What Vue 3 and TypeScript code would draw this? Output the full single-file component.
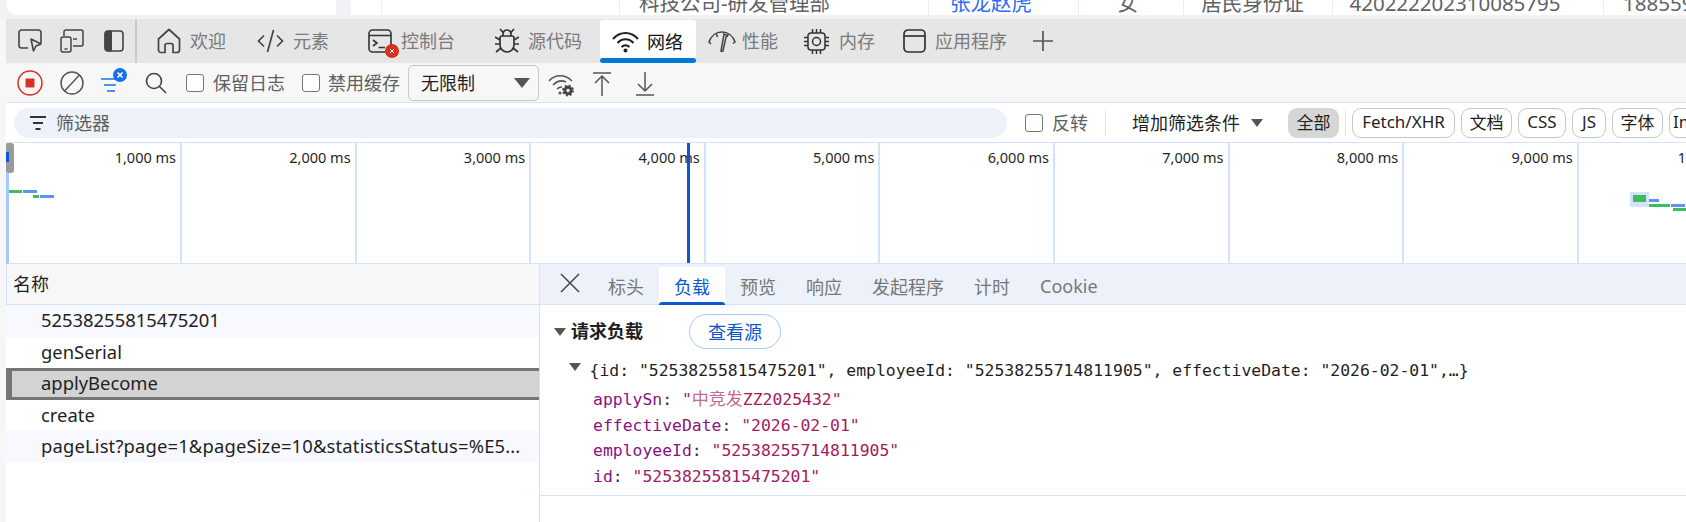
<script setup lang="ts">
const marks: string[] = ['1,000 ms', '2,000 ms', '3,000 ms', '4,000 ms', '5,000 ms', '6,000 ms', '7,000 ms', '8,000 ms', '9,000 ms', '10,000 ms']
const rows: { name: string; cls: string }[] = [
  { name: '52538255815475201', cls: 'alt' },
  { name: 'genSerial', cls: '' },
  { name: 'applyBecome', cls: 'sel' },
  { name: 'create', cls: '' },
  { name: 'pageList?page=1&pageSize=10&statisticsStatus=%E5...', cls: 'alt long' },
]
const chips: { label: string; cls: string }[] = [
  { label: 'Fetch/XHR', cls: 'fx' },
  { label: '文档', cls: 'cj' },
  { label: 'CSS', cls: 'cs' },
  { label: 'JS', cls: 'js' },
  { label: '字体', cls: 'cj' },
  { label: 'Img', cls: 'im' },
]
const details: string[] = ['标头', '负载', '预览', '响应', '发起程序', '计时', 'Cookie']
const payload: { k: string; cjk?: string; v: string }[] = [
  { k: 'applySn', cjk: '中竞发', v: 'ZZ2025432"' },
  { k: 'effectiveDate', v: '2026-02-01"' },
  { k: 'employeeId', v: '52538255714811905"' },
  { k: 'id', v: '52538255815475201"' },
]
</script>

<template>
  <div class="root">
    <div class="page">
      <div class="card"></div>
      <div class="table">
        <div class="cell c0"></div>
        <div class="cell c1"></div>
        <div class="cell c2">科技公司-研发管理部</div>
        <div class="cell c3 link">张龙赵虎</div>
        <div class="cell c4">女</div>
        <div class="cell c5">居民身份证</div>
        <div class="cell c6">420222202310085795</div>
        <div class="cell c7">18855912345</div>
      </div>
    </div>

    <div class="devtools">
      <div class="tabbar">
        <svg class="ico first" width="24" height="24" viewBox="0 0 24 24" fill="none" stroke="#444" stroke-width="1.6"><path d="M10 19H3.500A2.500 2.500 0 0 1 1 16.500V3.500A2.500 2.500 0 0 1 3.500 1h17A2.500 2.500 0 0 1 23 3.500V14"/><path d="M13 10l2.500 12 2.500-5 5-2z" stroke-linejoin="round"/></svg>
        <svg class="ico second" width="24" height="24" viewBox="0 0 24 24" fill="none" stroke="#444" stroke-width="1.500"><path d="M4 7V3a2 2 0 0 1 2-2h15a2 2 0 0 1 2 2v12a2 2 0 0 1-2 2h-8"/><rect x="1" y="8" width="10" height="15" rx="2"/><path d="M4.500 20h3M13 10h4"/></svg>
        <svg class="ico third" width="20" height="22" viewBox="0 0 20 22"><rect x="1" y="1" width="18" height="20" rx="3" fill="none" stroke="#444" stroke-width="1.600"/><path d="M4 1h3.500v20H4a3 3 0 0 1-3-3V4a3 3 0 0 1 3-3z" fill="#444" stroke="#444"/></svg>
        <div class="vsep"></div>

        <div class="tab t1">
          <svg width="24" height="26" viewBox="0 0 24 26" fill="none" stroke="#444" stroke-width="1.700" stroke-linejoin="round"><path d="M8 24.500H4a2.500 2.500 0 0 1-2.500-2.500V11L12 1.500 22.500 11v11a2.500 2.500 0 0 1-2.500 2.500h-4v-7a2 2 0 0 0-2-2h-4a2 2 0 0 0-2 2z"/></svg>
          <span>欢迎</span>
        </div>
        <div class="tab t2">
          <svg width="27" height="24" viewBox="0 0 27 24" fill="none" stroke="#444" stroke-width="1.700"><path d="M7 6.500L1.500 12 7 17.500M20 6.500l5.500 5.500-5.500 5.500M16.500 1l-6 22"/></svg>
          <span>元素</span>
        </div>
        <div class="tab t3">
          <div class="con">
            <svg width="24" height="24" viewBox="0 0 24 24" fill="none" stroke="#333" stroke-width="1.600"><rect x="1" y="1" width="22" height="22" rx="3.500"/><path d="M1 6.500h22M5 11l4 3-4 3M10.500 18.500H17"/></svg>
            <div class="badge"><svg width="6" height="6" viewBox="0 0 6 6" stroke="#fff" stroke-width="1"><path d="M1 1l4 4M5 1l-4 4"/></svg></div>
          </div>
          <span>控制台</span>
        </div>
        <div class="tab t4">
          <svg width="24" height="26" viewBox="0 0 24 26" fill="none" stroke="#333" stroke-width="1.700"><path d="M7 8h10a2 2 0 0 1 2 2v7a7 7 0 0 1-14 0v-7a2 2 0 0 1 2-2z"/><path d="M8 8V6a4 4 0 0 1 8 0v2M5 1l3.500 4M19 1l-3.500 4M0 9l5 3M24 9l-5 3M0 16h5M24 16h-5M1 24l5-4M23 24l-5-4"/></svg>
          <span>源代码</span>
        </div>
        <div class="tab t5 active">
          <svg width="27" height="22" viewBox="0 0 27 22" fill="none" stroke="#222" stroke-width="2"><path d="M1 8c7-8 18-8 25 0M5.500 12c4.500-5 11.500-5 16 0M9.500 16c2.500-2.500 5.500-2.500 8 0"/><circle cx="13.500" cy="19.500" r="2" fill="#222" stroke="none"/></svg>
          <span>网络</span>
        </div>
        <div class="tab t6">
          <svg width="28" height="22" viewBox="0 0 28 22" fill="none" stroke="#444" stroke-width="1.500"><path d="M3 14L1 12C3 6 8 2 14 2c6 0 11 4 13 10l-2 1.500"/><path d="M8 3l1.500 4M20.500 4L19 7"/><path d="M13 21l3-17 2.500 1-3.500 15.500a1 1 0 0 1-2 .5z" fill="#e6e6e6"/></svg>
          <span>性能</span>
        </div>
        <div class="tab t7">
          <svg width="27" height="27" viewBox="0 0 27 27" fill="none" stroke="#333" stroke-width="1.500"><rect x="5" y="5" width="17" height="17" rx="3"/><circle cx="13.500" cy="13.500" r="4"/><path d="M9.500 1v4M13.500 1v4M17.500 1v4M9.500 22v4M13.500 22v4M17.500 22v4M1 9.500h4M1 13.500h4M1 17.500h4M22 9.500h4M22 13.500h4M22 17.500h4"/></svg>
          <span>内存</span>
        </div>
        <div class="tab t8">
          <svg width="23" height="24" viewBox="0 0 23 24" fill="none" stroke="#333" stroke-width="1.700"><rect x="1" y="1" width="21" height="22" rx="4"/><path d="M1 7h21"/></svg>
          <span>应用程序</span>
        </div>
        <svg class="plus" width="20" height="20" viewBox="0 0 20 20" stroke="#555" stroke-width="1.700"><path d="M10 0v20M0 10h20"/></svg>
      </div>

      <div class="toolbar">
        <svg class="tool rec" width="26" height="26" viewBox="0 0 26 26"><circle cx="13" cy="13" r="12" fill="none" stroke="#d93025" stroke-width="1.500"/><rect x="8.500" y="8.500" width="9" height="9" rx="1" fill="#d93025"/></svg>
        <svg class="tool clr" width="24" height="24" viewBox="0 0 24 24" fill="none" stroke="#555" stroke-width="1.500"><circle cx="12" cy="12" r="11"/><path d="M4.500 20L19.500 4"/></svg>
        <div class="fil">
          <svg width="27" height="27" viewBox="0 0 27 27"><path d="M0 11h17M3 17h12M6 23h8" stroke="#1a73e8" stroke-width="1.600"/><circle cx="19" cy="7" r="7" fill="#1a6fe8"/><path d="M16.500 4.500l5 5M21.500 4.500l-5 5" stroke="#fff" stroke-width="1.600"/></svg>
        </div>
        <svg class="tool srch" width="22" height="22" viewBox="0 0 22 22" fill="none" stroke="#444" stroke-width="1.600"><circle cx="9" cy="9" r="7.500"/><path d="M14.500 14.500L21 21"/></svg>
        <label class="chk c-a"><i class="box"></i><span>保留日志</span></label>
        <label class="chk c-b"><i class="box"></i><span>禁用缓存</span></label>
        <div class="select"><span>无限制</span><i class="tri"></i></div>
        <svg class="tool wg" width="26" height="26" viewBox="0 0 26 26" fill="none" stroke="#555" stroke-width="1.600"><path d="M1 10c6-7 16-7 23 0M5 14c4-4 9-5 13-3M9 18c1.500-1.500 3-2 5-2"/><circle cx="12" cy="22" r="1.500" fill="#555" stroke="none"/><circle cx="20" cy="19.500" r="3.200" stroke="#444" stroke-width="3"/><circle cx="20" cy="19.500" r="5" stroke="#444" stroke-width="1.800" stroke-dasharray="2 1.930"/></svg>
        <svg class="tool up" width="18" height="24" viewBox="0 0 18 24" fill="none" stroke="#555" stroke-width="1.500"><path d="M0 1h18M9 24V4M2 11l7-7 7 7"/></svg>
        <svg class="tool down" width="18" height="24" viewBox="0 0 18 24" fill="none" stroke="#555" stroke-width="1.500"><path d="M0 23h18M9 0v19M2 12l7 7 7-7"/></svg>
      </div>

      <div class="filters">
        <div class="pill">
          <svg width="16" height="14" viewBox="0 0 16 14" stroke="#333" stroke-width="1.900"><path d="M0 1h16M3 7h10M5.500 13h5"/></svg>
          <span>筛选器</span>
        </div>
        <label class="chk c-c"><i class="box"></i><span>反转</span></label>
        <div class="fsep s1"></div>
        <div class="more"><span>增加筛选条件</span><i class="tri small"></i></div>
        <div class="chip all">全部</div>
        <div class="fsep s2"></div>
        <div v-for="c in chips" :key="c.label" class="chip" :class="c.cls">{{ c.label }}</div>
      </div>

      <div class="overview">
        <div v-for="m in marks" :key="m" class="mark">{{ m }}</div>
        <div class="handle"><i></i></div>
        <div class="now"></div>
        <i class="bar g" style="left: 0; top: 47px; width: 13px"></i>
        <i class="bar b" style="left: 14px; top: 47px; width: 14px"></i>
        <i class="bar g" style="left: 24px; top: 52px; width: 6px"></i>
        <i class="bar b" style="left: 31px; top: 52px; width: 14px"></i>
        <i class="halo"></i>
        <i class="bar g" style="left: 1624px; top: 52px; width: 13px; height: 7px"></i>
        <i class="bar b" style="left: 1640px; top: 56px; width: 10px"></i>
        <i class="bar g" style="left: 1640px; top: 61px; width: 21px"></i>
        <i class="bar b" style="left: 1662px; top: 61px; width: 14px"></i>
        <i class="bar g" style="left: 1664px; top: 65px; width: 13px"></i>
      </div>

      <div class="split">
        <div class="list">
          <div class="lhead"><span>名称</span></div>
          <div v-for="r in rows" :key="r.name" class="row" :class="r.cls">{{ r.name }}</div>
        </div>
        <div class="detail">
          <div class="dtabs">
            <svg class="close" width="20" height="20" viewBox="0 0 20 20" stroke="#444" stroke-width="1.500"><path d="M1 1l18 18M19 1L1 19"/></svg>
            <div v-for="d in details" :key="d" class="dtab" :class="{ on: d === '负载' }">{{ d }}</div>
          </div>
          <div class="dbody">
            <div class="sect">
              <i class="tri small"></i>
              <strong>请求负载</strong>
              <div class="src">查看源</div>
            </div>
            <div class="obj"><i class="tri small"></i><code>{id: "52538255815475201", employeeId: "52538255714811905", effectiveDate: "2026-02-01",…}</code></div>
            <div v-for="p in payload" :key="p.k" class="kv"><b>{{ p.k }}</b><em>: </em><u>"<s v-if="p.cjk">{{ p.cjk }}</s>{{ p.v }}</u></div>
          </div>
        </div>
      </div>
    </div>
  </div>
</template>

<style>
html, body { margin: 0; background: #fff; }
</style>

<style scoped>
.root {
  width: 1686px;
  height: 522px;
  overflow: hidden;
  background: #f7f7f7;
  font-family: "Noto Sans", "Noto Sans CJK SC", sans-serif;
  font-size: 18px;
  color: #333;
}
.page {
  height: 19px;
  display: flex;
  background: #f1f2f5;
  overflow: hidden;
}
.card {
  width: 330px;
  height: 15px;
  margin-left: 6px;
  background: #fff;
  border-radius: 0 0 0 12px;
}
.table {
  margin-left: 15px;
  flex: 1;
  height: 15px;
  background: #fff;
  display: flex;
  overflow: hidden;
}
.cell {
  height: 15px;
  box-sizing: border-box;
  border-right: 1.500px solid #e9edf5;
  color: #606266;
  font-size: 20.500px;
  line-height: 6px;
  white-space: nowrap;
  text-align: center;
  flex: none;
}
.c0 { width: 31px; }
.c1 { width: 238px; }
.c2 { width: 309px; text-align: left; padding-left: 19px; }
.link { color: #2a6cf5; }
.c3 { width: 150px; padding-right: 25px; }
.c4 { width: 105px; padding-right: 6px; }
.c5 { width: 149px; padding-right: 11px; }
.c6 { width: 271px; padding-right: 26px; }
.c7 { width: 200px; text-align: left; padding-left: 19px; }

.devtools { margin-left: 6px; }
.tabbar {
  height: 44px;
  background: #e6e6e6;
  display: flex;
  align-items: center;
}
.ico { flex: none; }
.first { margin-left: 12px; }
.second { margin-left: 18px; }
.third { margin-left: 20px; }
.vsep {
  width: 2px;
  height: 44px;
  background: #c9c9c9;
  margin-left: 11px;
  flex: none;
}
.tab {
  display: flex;
  align-items: center;
  gap: 9px;
  height: 44px;
  box-sizing: border-box;
  padding: 0 13px;
  color: #7a7a7a;
  flex: none;
  position: relative;
  white-space: nowrap;
}
.tab span { padding-bottom: 2px; }
.t1 { margin-left: 7px; }
.t2 { margin-left: 5px; }
.t3 { margin-left: 13px; }
.t4 { margin-left: 14px; }
.t5 { margin-left: 5px; padding: 0 0 0 12px; gap: 8px; width: 96px; height: 43px; align-self: flex-end; background: #fff; color: #111; border-radius: 3px 3px 0 0; }
.t5::after {
  content: "";
  position: absolute;
  left: 0;
  right: 0;
  bottom: 0;
  height: 5px;
  background: #0078d4;
  border-radius: 3px;
}
.t6 { margin-left: -1px; gap: 6px; }
.t7 { margin-left: -1px; }
.t8 { margin-left: 2px; }
.con { position: relative; display: flex; }
.badge {
  position: absolute;
  left: 17px;
  top: 15px;
  width: 14px;
  height: 14px;
  border-radius: 50%;
  background: #d93025;
  display: flex;
  align-items: center;
  justify-content: center;
}
.plus { margin-left: 13px; flex: none; }

.toolbar {
  height: 39px;
  background: #f7f7f7;
  border-bottom: 1px solid #d3e3fd;
  display: flex;
  align-items: center;
  color: #5f5f5f;
}
.tool { flex: none; }
.rec { margin-left: 11px; }
.clr { margin-left: 17px; }
.fil { margin-left: 17px; display: flex; height: 27px; width: 27px; flex: none; margin-top: -3px; }
.srch { margin-left: 17px; }
.chk { display: flex; align-items: center; gap: 9px; flex: none; color: #5f5f5f; }
.chk span, .select span, .pill span, .more span { padding-bottom: 2px; }
.box {
  display: block;
  width: 16px;
  height: 16px;
  border: 1.500px solid #767676;
  border-radius: 3px;
  background: #fff;
  flex: none;
}
.c-a { margin-left: 19px; }
.c-b { margin-left: 17px; gap: 8px; }
.select {
  margin-left: 8px;
  width: 131px;
  height: 36px;
  box-sizing: border-box;
  border: 1px solid #c7c7c7;
  border-radius: 5px;
  display: flex;
  align-items: center;
  padding: 0 8px 0 12px;
  justify-content: space-between;
  color: #1f1f1f;
  flex: none;
}
.tri {
  display: block;
  width: 0;
  height: 0;
  border-left: 8px solid transparent;
  border-right: 8px solid transparent;
  border-top: 10px solid #555;
  flex: none;
}
.tri.small {
  border-left-width: 6.500px;
  border-right-width: 6.500px;
  border-top-width: 8px;
}
.wg { margin-left: 9px; margin-top: 2px; }
.up { margin-left: 19px; margin-top: 2px; }
.down { margin-left: 25px; margin-top: 2px; }

.filters {
  height: 39px;
  border-bottom: 1px solid #d3e3fd;
  background: #fff;
  display: flex;
  align-items: center;
  overflow: hidden;
  position: relative;
}
.pill {
  margin-left: 8px;
  width: 993px;
  height: 30px;
  box-sizing: border-box;
  border-radius: 15px;
  background: #edf2fa;
  display: flex;
  align-items: center;
  padding-left: 16px;
  gap: 10px;
  color: #5f5f5f;
  flex: none;
}
.c-c { margin-left: 18px; }
.fsep { width: 1px; height: 24px; background: #d3e3fd; flex: none; }
.s1 { margin-left: 17px; }
.more {
  margin-left: 26px;
  display: flex;
  align-items: center;
  gap: 11px;
  color: #1f1f1f;
  flex: none;
}
.chip {
  height: 30px;
  box-sizing: border-box;
  border: 1px solid #c7c7c7;
  border-radius: 9px;
  font-size: 17px;
  color: #1f1f1f;
  padding-bottom: 2px;
  display: flex;
  align-items: center;
  justify-content: center;
  margin-right: 6px;
  flex: none;
}
.fx { width: 103px; }
.cj { width: 51px; }
.cs { width: 48px; }
.js { width: 34px; }
.im { width: 40px; }
.all {
  margin-left: 25px;
  margin-right: 0;
  width: 51px;
  background: #d6d6d6;
  border: none;
}
.s2 { margin: 0 6px; }

.overview {
  position: relative;
  height: 120px;
  background: #fff;
  display: flex;
  border-left: 3px solid #a8c7fa;
  border-bottom: 1px solid #d3e3fd;
}
.mark {
  width: 174.600px;
  height: 120px;
  box-sizing: border-box;
  border-right: 2px solid #d3e3fd;
  flex: none;
  text-align: right;
  padding: 4px 4px 0 0;
  font-size: 14.500px;
  color: #1f1f1f;
  white-space: nowrap;
}
.mark:first-child { width: 173px; }
.handle {
  position: absolute;
  left: -3px;
  top: 0;
  width: 8px;
  height: 30px;
  background: #9a9a9a;
  border-radius: 3px;
}
.handle i {
  display: block;
  width: 3px;
  height: 10px;
  background: #0b57d0;
  margin-top: 9px;
}
.now {
  position: absolute;
  left: 678px;
  top: 0;
  bottom: 0;
  width: 3px;
  background: #0b57d0;
}
.bar {
  position: absolute;
  height: 3px;
  display: block;
}
.g { background: #3dbd5d; }
.b { background: #5a95f5; }
.halo {
  position: absolute;
  left: 1621px;
  top: 49px;
  width: 19px;
  height: 15px;
  background: #d3e3fd;
}

.split { display: flex; height: 258px; }
.list {
  width: 534px;
  flex: none;
  background: #fff;
  box-sizing: border-box;
  border-right: 1.500px solid #d3e3fd;
}
.lhead {
  height: 41px;
  box-sizing: border-box;
  background: #f7f7f7;
  border-bottom: 1.500px solid #d3e3fd;
  border-left: 1px solid #d3e3fd;
  padding-left: 6px;
  display: flex;
  align-items: center;
  color: #1f1f1f;
}
.lhead span { padding-bottom: 2px; }
.row {
  height: 31.500px;
  line-height: 30px;
  padding-left: 35px;
  color: #1f1f1f;
  white-space: nowrap;
  box-sizing: border-box;
  font-size: 18.400px;
}
.long { letter-spacing: 0.160px; }
.alt { background: #f8f9fe; }
.sel {
  background: #d3d3d3;
  border: 3px solid #767676;
  border-left-width: 6px;
  border-right: none;
  line-height: 24px;
  padding-left: 29px;
}
.detail { flex: 1; min-width: 0; background: #fff; }
.dtabs {
  height: 41px;
  box-sizing: border-box;
  background: #edf2fa;
  border-bottom: 1.500px solid #d3e3fd;
  display: flex;
  align-items: flex-end;
  position: relative;
}
.close { margin: 0 13px 11px 20px; flex: none; }
.dtab {
  height: 37px;
  box-sizing: border-box;
  padding: 0 15px;
  display: flex;
  align-items: center;
  color: #777;
  flex: none;
  position: relative;
}
.dtab.on {
  color: #0b57d0;
  background: #fff;
  border-radius: 3px 3px 0 0;
}
.dtab.on::after {
  content: "";
  position: absolute;
  left: 0;
  right: 0;
  bottom: -1px;
  height: 3px;
  background: #0b57d0;
  border-radius: 3px 3px 0 0;
}
.dbody {
  height: 191px;
  border-bottom: 1.500px solid #d3e3fd;
  padding-left: 14px;
  box-sizing: border-box;
}
.sect {
  display: flex;
  align-items: center;
  height: 35px;
  padding-top: 9px;
  color: #1f1f1f;
}
.sect strong { margin-left: 5px; font-weight: 700; padding-bottom: 3px; }
.src {
  margin-left: 46px;
  width: 92px;
  height: 35px;
  box-sizing: border-box;
  border: 1.500px solid #a8c7fa;
  border-radius: 18px;
  color: #0b57d0;
  display: flex;
  align-items: center;
  justify-content: center;
  padding-bottom: 2px;
}
.obj {
  display: flex;
  align-items: center;
  padding-left: 15px;
  height: 26px;
  margin-top: 8px;
  margin-bottom: 4px;
  gap: 8.500px;
}
.obj .tri { margin-top: -6px; }
code, .kv {
  font-family: "DejaVu Sans Mono", "Noto Sans CJK SC", monospace;
  font-size: 16.420px;
  white-space: nowrap;
  color: #1f1f1f;
}
.kv {
  height: 25.500px;
  line-height: 25.500px;
  padding-left: 39px;
}
.kv b { font-weight: 400; color: #881280; }
.kv em { font-style: normal; color: #333; }
.kv u { text-decoration: none; color: #a31a5f; }
.kv s { text-decoration: none; font-size: 17px; color: #c06a95; }
</style>
